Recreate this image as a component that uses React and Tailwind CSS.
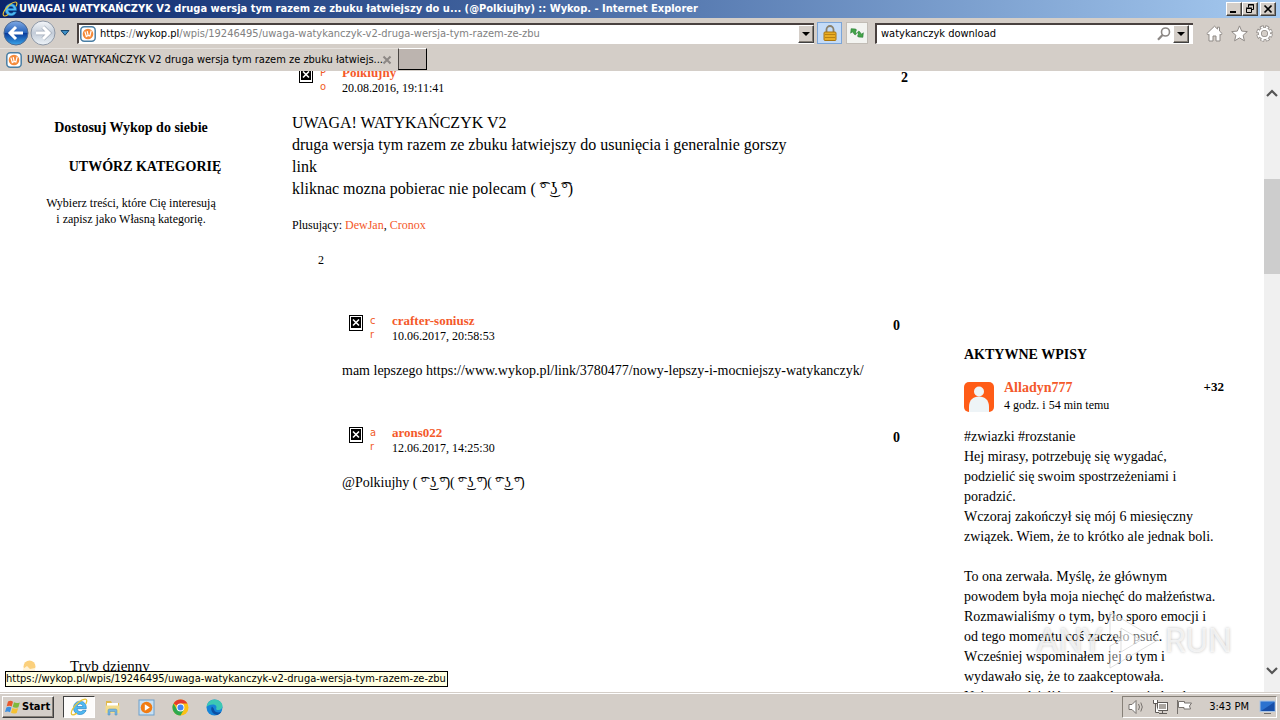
const TITLE = "UWAGA! WATYKAŃCZYK V2 druga wersja tym razem ze zbuku łatwiejszy do u... (@Polkiujhy) :: Wykop. - Internet Explorer";
const FACE = "( ͡° ͜ʖ ͡°)";
const RAISED = "border border-t-white border-l-white border-r-[#404040] border-b-[#404040] bg-[#d4cec8] shadow-[inset_-1px_-1px_0_#868078]";

function IeLogo({ className }) {
  return (
    <svg viewBox="0 0 18 18" className={className} aria-hidden="true">
      <path d="M16.300 10.700H7.100C7.300 12.600 8.500 13.700 10.200 13.700c1.200 0 2.100-.5 2.700-1.400h3.200c-.9 2.600-3.100 4.200-6 4.200-3.900 0-6.600-2.800-6.600-6.600S6.200 3.200 10 3.200s6.500 2.700 6.300 7.500zM7.200 8.500h5.700C12.700 6.900 11.700 6 10.100 6S7.500 6.900 7.200 8.500z" fill="#4fb9f2" stroke="#1978c0" strokeWidth=".6" />
      <path d="M16 5.500C17.300 3 16.900 1.200 15.200 1.100 12 1 5.800 5.400 2.500 11.200.8 14.400.8 17 3 16.900c1 0 2.200-.6 3.500-1.500" fill="none" stroke="#e9c437" strokeWidth="1.300" strokeLinecap="round" />
    </svg>
  );
}

function WykopIcon({ className }) {
  return (
    <svg viewBox="0 0 16 16" className={className} aria-hidden="true">
      <rect x=".8" y=".8" width="14.400" height="14.400" rx="3.500" fill="#fff" stroke="#4a7ea4" strokeWidth="1.500" />
      <circle cx="8" cy="8" r="5.300" fill="#f58a3a" />
      <path d="M4.900 5.600l1.400 4.900 1.700-1.100 1.900.5 1.300-5.200M7.200 5.200l.9 4" fill="none" stroke="#fff" strokeWidth="1.200" />
    </svg>
  );
}

function DropButton({ label }) {
  return (
    <button aria-label={label} className={`grid h-[18px] w-4 shrink-0 place-items-center ${RAISED}`}>
      <svg viewBox="0 0 8 4" className="h-1 w-2"><path d="M0 0h8L4 4z" fill="#000" /></svg>
    </button>
  );
}

function WindowButton({ label, children }) {
  return (
    <button aria-label={label} className={`grid h-[14px] w-4 place-items-center ${RAISED}`}>
      <svg viewBox="0 0 12 10" className="h-[10px] w-3" fill="none" stroke="#000">{children}</svg>
    </button>
  );
}

function Chrome() {
  return (
    <header className="shrink-0 bg-[#d4cec8] font-['DejaVu_Sans_Condensed',sans-serif] text-[11px]">
      <div className="flex h-[18px] items-center gap-px bg-linear-to-r from-[#0a246a] to-[#a6caf0] pl-0.5 pr-1 text-white">
        <IeLogo className="size-4 shrink-0" />
        <h1 className="min-w-0 flex-1 truncate text-[11px] leading-[18px] font-bold">{TITLE}</h1>
        <div className="flex">
          <WindowButton label="Minimize"><path d="M2 8h6" strokeWidth="2" /></WindowButton>
          <WindowButton label="Restore"><path d="M4.500 3.500v-3h5v5H8M4 1h6M2.500 4.500h5v4h-5zM2 4h6" /></WindowButton>
          <div className="w-0.5" />
          <WindowButton label="Close"><path d="M2.500 1.500l7 7M9.500 1.500l-7 7" strokeWidth="1.700" /></WindowButton>
        </div>
      </div>
      <div className="flex h-[30px] items-center pl-[3px] pr-[7px]">
        <button aria-label="Back" className="shrink-0">
          <svg viewBox="0 0 26 26" className="size-[26px]">
            <defs><linearGradient id="bk" x1="0" y1="0" x2="0" y2="1"><stop offset="0" stopColor="#7fa9e4" /><stop offset=".48" stopColor="#2763bb" /><stop offset=".52" stopColor="#0a3c9c" /><stop offset="1" stopColor="#3ba6ea" /></linearGradient></defs>
            <circle cx="13" cy="13" r="12" fill="url(#bk)" stroke="#4e6991" />
            <path d="M20 13H8M13 7l-6 6 6 6" fill="none" stroke="#fff" strokeWidth="3" />
          </svg>
        </button>
        <button aria-label="Forward" className="ml-px shrink-0">
          <svg viewBox="0 0 26 26" className="size-[26px]">
            <defs><linearGradient id="fw" x1="0" y1="0" x2="0" y2="1"><stop offset="0" stopColor="#f5f7fa" /><stop offset=".5" stopColor="#c3ccd8" /><stop offset="1" stopColor="#eef4f9" /></linearGradient></defs>
            <circle cx="13" cy="13" r="12" fill="url(#fw)" stroke="#8e98a6" />
            <path d="M6 13h12M13 7l6 6-6 6" fill="none" stroke="#a3adba" strokeWidth="4.400" />
            <path d="M6 13h12M13 7l6 6-6 6" fill="none" stroke="#fff" strokeWidth="3" />
          </svg>
        </button>
        <button aria-label="Recent pages" className="ml-1 shrink-0">
          <svg viewBox="0 0 10 6" className="h-1.5 w-2.5"><path d="M1 .5h8L5 5.300z" fill="#3d8fc6" stroke="#16456c" /></svg>
        </button>
        <div className="ml-[7px] flex h-[21px] min-w-0 flex-1 items-center gap-1 border-t-2 border-l-2 border-[#49413f] border-b border-b-white bg-white pl-px">
          <WykopIcon className="size-4 shrink-0" />
          <div role="textbox" aria-label="Address" contentEditable suppressContentEditableWarning className="min-w-0 flex-1 truncate leading-[18px] text-[#818181] outline-none">
            <span className="text-black">https</span>://<span className="text-black">wykop.pl</span>/wpis/19246495/uwaga-watykanczyk-v2-druga-wersja-tym-razem-ze-zbu
          </div>
          <DropButton label="Show addresses" />
        </div>
        <button aria-label="Security report" className="ml-[3px] grid h-[22px] w-[25px] shrink-0 place-items-center border border-[#7ba5d8] bg-[#c4dbf7]">
          <svg viewBox="0 0 14 16" className="h-4 w-3.5">
            <path d="M3.500 8V4.500a3.500 3.500 0 0 1 7 0V8" fill="none" stroke="#8a806a" strokeWidth="1.800" />
            <rect x="1" y="7" width="12" height="8.500" rx="1" fill="#e9ad25" stroke="#a87510" />
            <path d="M2 9.500h10M2 12.500h10" stroke="#b98212" />
          </svg>
        </button>
        <button aria-label="Refresh" className="ml-1 grid h-[22px] w-[22px] shrink-0 place-items-center border border-[#c2bdb6] bg-[#f3f4f1]">
          <svg viewBox="0 0 16 16" className="size-4" fill="#44a548" stroke="#207530" strokeWidth=".5">
            <path d="M4 3.200L.8 6.500 4 9.800V7.600h4.200V5.600Q5.600 5.800 5.200 3.200z" transform="rotate(50 4.500 6.500)" />
            <path d="M12 12.800l3.200-3.300L12 6.200v2.200H7.800v2Q10.400 10.200 10.800 12.800z" transform="rotate(50 11.500 9.500)" />
          </svg>
        </button>
        <div className="ml-[7px] flex h-[21px] w-[318px] items-center border-t-2 border-l-2 border-[#49413f] border-b border-b-white bg-white pr-1">
          <input aria-label="Search" defaultValue="watykanczyk download" className="h-[18px] min-w-0 flex-1 bg-white pl-1 text-[11px] outline-none" />
          <button aria-label="Run search" className="mr-px">
            <svg viewBox="0 0 16 16" className="size-4" fill="none" stroke="#8b8784"><circle cx="9.500" cy="6" r="4" strokeWidth="1.600" /><path d="M6.500 9L2 13.800" strokeWidth="2.200" /></svg>
          </button>
          <DropButton label="Search options" />
        </div>
        <nav className="ml-[13px] flex gap-2">
          <button aria-label="Home">
            <svg viewBox="0 0 17 17" className="size-[17px]" fill="#fff" stroke="#8f8a86"><path d="M8.500 1.200L.8 8.600l1.400 1.300.8-.7v6.800h4v-5h3v5h4V9.200l.8.700 1.400-1.300-2.700-2.600V2.200h-2v1.900z" /></svg>
          </button>
          <button aria-label="Favorites">
            <svg viewBox="0 0 17 17" className="size-[17px]" fill="#fff" stroke="#8f8a86"><path d="M8.500.9l2.200 5.200 5.600.5-4.200 3.700 1.300 5.500-4.900-2.900-4.900 2.900 1.300-5.500L.7 6.600l5.600-.5z" /></svg>
          </button>
          <button aria-label="Tools">
            <svg viewBox="0 0 17 17" className="size-[17px]" fill="none">
              <circle cx="8.500" cy="8.500" r="6.500" stroke="#8f8a86" strokeWidth="3.400" strokeDasharray="3.600 1.505" />
              <circle cx="8.500" cy="8.500" r="4.600" stroke="#8f8a86" strokeWidth="3.800" />
              <circle cx="8.500" cy="8.500" r="6.500" stroke="#fff" strokeWidth="2" strokeDasharray="2.200 2.905" strokeDashoffset="-.7" />
              <circle cx="8.500" cy="8.500" r="4.600" stroke="#fff" strokeWidth="2.200" />
            </svg>
          </button>
        </nav>
      </div>
      <div className="flex h-[23px] items-start">
        <div className="flex h-[23px] w-[398px] items-center border-t border-[#e6e2de] pl-1.5 pr-1.5">
          <WykopIcon className="size-4 shrink-0" />
          <span className="ml-[5px] min-w-0 flex-1 whitespace-nowrap">UWAGA! WATYKAŃCZYK V2 druga wersja tym razem ze zbuku łatwiejs...</span>
          <button aria-label="Close tab" className="shrink-0">
            <svg viewBox="0 0 10 10" className="size-2.5"><path d="M1.500 1.500l7 7M8.500 1.500l-7 7" stroke="#8d8885" strokeWidth="2" /></svg>
          </button>
        </div>
        <button aria-label="New tab" className="h-[22px] w-[29px] border border-t-white border-l-[#4a4542] border-r-black border-b-black bg-[#bcb4af]" />
      </div>
    </header>
  );
}

function PostHeader({ letters, name, date, score }) {
  return (
    <div className="flex h-[30px] pl-[7px]">
      <svg viewBox="0 0 14 16" className="mt-px h-4 w-3.5 shrink-0" role="img" aria-label={name}>
        <rect x=".5" y=".5" width="13" height="15" fill="#fff" stroke="#000" />
        <rect x="2" y="2" width="10" height="11" fill="#000" />
        <path d="M4 4.500l6 6M10 4.500l-6 6" stroke="#fff" strokeWidth="1.600" />
      </svg>
      <span className="ml-[7px] w-[22px] shrink-0 font-['DejaVu_Sans_Condensed',sans-serif] text-[11px] leading-[14px] text-[#f05a28]">
        {letters[0]}<br />{letters[1]}
      </span>
      <div className="flex-1 text-[12px]">
        <a href="#" className="block text-[13px] leading-[14px] font-bold text-[#f4592a]">{name}</a>
        <time className="block leading-4">{date}</time>
      </div>
      <b className="text-[14px] leading-[23px]">{score}</b>
    </div>
  );
}

function Reply({ children, ...head }) {
  return (
    <article className="mb-[45px]">
      <PostHeader {...head} />
      <p className="mt-[17px] text-[14px] leading-5">{children}</p>
    </article>
  );
}

const WALL = [
  "#zwiazki #rozstanie", "Hej mirasy, potrzebuję się wygadać,", "podzielić się swoim spostrzeżeniami i", "poradzić.",
  "Wczoraj zakończył się mój 6 miesięczny", "związek. Wiem, że to krótko ale jednak boli.", "",
  "To ona zerwała. Myślę, że głównym", "powodem była moja niechęć do małżeństwa.", "Rozmawialiśmy o tym, było sporo emocji i",
  "od tego momentu coś zaczęło psuć.", "Wcześniej wspominałem jej o tym i", "wydawało się, że to zaakceptowała.", "Najgorsze dzieliśmy ze sobą to, że bardzo",
].join("\n");

function Page() {
  return (
    <div className="relative flex min-h-0 flex-1 overflow-hidden bg-white font-['Liberation_Serif',serif] text-black">
      <aside className="flex w-[262px] shrink-0 flex-col text-center">
        <h2 className="mt-[47px] text-[14px] leading-5 font-bold">Dostosuj Wykop do siebie</h2>
        <h2 className="mt-5 pl-7 text-[14px] leading-[18px] font-bold">UTWÓRZ KATEGORIĘ</h2>
        <p className="mt-[19px] text-[12px] leading-4">Wybierz treści, które Cię interesują<br />i zapisz jako Własną kategorię.</p>
        <button className="mt-auto mb-4 flex items-center gap-[34px] pl-[23px] text-[15px] leading-5">
          <svg viewBox="0 0 13 13" className="size-[13px]"><circle cx="6.500" cy="6.500" r="6" fill="#fbd07c" /><path d="M0 9l4-3 3 3 5-1v5H0z" fill="#fff3d8" /></svg>
          Tryb dzienny
        </button>
      </aside>
      <main className="min-w-0 flex-1 pl-[30px]">
        <article className="-mt-[5px]">
          <PostHeader letters="Po" name="Polkiujhy" date="20.08.2016, 19:11:41" score="2" />
          <p className="mt-4 text-[16px] leading-[22px]">
            UWAGA! WATYKAŃCZYK V2<br />druga wersja tym razem ze zbuku łatwiejszy do usunięcia i generalnie gorszy<br />link<br />kliknac mozna pobierac nie polecam {FACE}
          </p>
          <p className="mt-[17px] text-[12px] leading-4">
            Plusujący: <a href="#" className="text-[#f4592a]">DewJan</a>, <a href="#" className="text-[#f4592a]">Cronox</a>
          </p>
          <p className="mt-[19px] pl-[26px] text-[12px] leading-4">2</p>
        </article>
        <section className="mt-[46px] pr-2 pl-[50px]">
          <Reply letters="cr" name="crafter-soniusz" date="10.06.2017, 20:58:53" score="0">
            mam lepszego https://www.wykop.pl/link/3780477/nowy-lepszy-i-mocniejszy-watykanczyk/
          </Reply>
          <Reply letters="ar" name="arons022" date="12.06.2017, 14:25:30" score="0">
            @Polkiujhy {FACE}{FACE}{FACE}
          </Reply>
        </section>
      </main>
      <aside className="mr-10 ml-14 w-[260px] shrink-0 pt-[274px]">
        <h2 className="text-[14px] leading-5 font-bold">AKTYWNE WPISY</h2>
        <div className="mt-3.5 flex gap-2.5">
          <svg viewBox="0 0 30 30" className="mt-[3px] size-[30px]" aria-hidden="true">
            <rect width="30" height="30" rx="5" fill="#ff5c17" />
            <circle cx="15" cy="9.500" r="5" fill="#eef4f7" />
            <path d="M5 30V25c0-7 4-10.500 10-10.500S25 18 25 25v5z" fill="#eef4f7" />
          </svg>
          <div className="flex-1">
            <a href="#" className="block text-[14px] leading-[18px] font-bold text-[#f4592a]">Alladyn777</a>
            <time className="block text-[12px] leading-4">4 godz. i 54 min temu</time>
          </div>
          <b className="text-[13px] leading-4">+32</b>
        </div>
        <p className="mt-[14px] text-[14px] leading-5 whitespace-pre">{WALL}</p>
      </aside>
      <div className="flex w-4 shrink-0 flex-col items-center bg-[#f0f0f0]">
        <svg viewBox="0 0 12 8" className="mt-[18px] h-2 w-3" fill="none" stroke="#555" strokeWidth="2.200"><path d="M1 7l5-5 5 5" /></svg>
        <div className="mt-[82px] h-[95px] w-full bg-[#cdcdcd]" />
        <svg viewBox="0 0 12 8" className="mt-auto mb-[17px] h-2 w-3" fill="none" stroke="#555" strokeWidth="2.200"><path d="M1 1l5 5 5-5" /></svg>
      </div>
      <div className="pointer-events-none absolute right-12 bottom-[22px] flex items-center gap-1 font-['Roboto',sans-serif] text-[34px] leading-[50px] text-white/70 [text-shadow:0_0_3px_rgba(0,0,0,0.25)]">
        <span>ANY</span>
        <svg viewBox="0 0 54 60" className="h-[60px] w-[54px]" fill="#fff" fillOpacity=".4" stroke="#d6d6d6" strokeOpacity=".8"><path d="M3 2l48 28L3 58V36l11-6L3 24z" /><path d="M14 18l20 12-20 12z" /></svg>
        <span>RUN</span>
      </div>
      <div role="status" className="absolute bottom-[5px] left-[5px] border border-black bg-[#ffffe1] pr-px font-['DejaVu_Sans_Condensed',sans-serif] text-[11px] leading-[14px]">
        https://wykop.pl/wpis/19246495/uwaga-watykanczyk-v2-druga-wersja-tym-razem-ze-zbu
      </div>
    </div>
  );
}

function Taskbar() {
  return (
    <footer className="flex h-7 shrink-0 items-center bg-[#d4cec8] pt-0.5 pr-[3px] pl-0.5 font-['DejaVu_Sans_Condensed',sans-serif] text-[11px] shadow-[inset_0_1px_0_#d4cec8,inset_0_2px_0_#fff]">
      <button className={`flex h-[22px] w-[52px] items-center gap-px pl-0.5 font-bold ${RAISED}`}>
        <svg viewBox="0 0 16 16" className="size-4 shrink-0">
          <path d="M3 2.500c2-1 3.500-.8 5 .2L6.700 7.500c-1.500-1-3-1-5-.2z" fill="#e8582c" />
          <path d="M9 3.200c1.700 1 3.500 1 5.800.2L13.400 8.200c-2.200.8-4 .7-5.700-.3z" fill="#7fb93c" />
          <path d="M1.400 8.400c2-.8 3.500-.8 5 .2L5 13.300c-1.500-1-3-1-5-.2z" fill="#3c8fe0" />
          <path d="M7.400 9c1.700 1 3.500 1 5.700.3l-1.400 4.700c-2.200.8-4 .7-5.700-.3z" fill="#f5c132" />
        </svg>
        Start
      </button>
      <div className="ml-[9px] flex items-center">
        <button aria-label="Internet Explorer" className="grid h-[22px] w-8 place-items-center border border-t-[#404040] border-l-[#404040] border-r-white border-b-white bg-[#fdfcfb]">
          <IeLogo className="size-[18px]" />
        </button>
        <div className="ml-[9px] flex gap-[17px]">
          <button aria-label="File Explorer">
            <svg viewBox="0 0 17 17" className="size-[17px]"><path d="M2 2h5l1 2h7v10H2z" fill="#e0b94c" /><path d="M3 4h11v3H3z" fill="#fff" /><path d="M1.500 6.500h14V14h-14z" fill="#f3dc8c" /><path d="M4 16v-4.500q0-1.500 1.500-1.500h6q1.500 0 1.500 1.500V16h-2v-3.500H6V16z" fill="#76b5de" stroke="#4c8db9" strokeWidth=".5" /></svg>
          </button>
          <button aria-label="Media Player">
            <svg viewBox="0 0 17 17" className="size-[17px]"><rect x="1" y="1" width="15" height="15" fill="#c8e0f3" stroke="#6da0cb" /><circle cx="8.500" cy="8.500" r="5.800" fill="#f17c13" /><path d="M6.800 5.200l5 3.300-5 3.300z" fill="#fff" /></svg>
          </button>
          <button aria-label="Chrome">
            <svg viewBox="0 0 17 17" className="size-[17px]"><circle cx="8.500" cy="8.500" r="8" fill="#fbc116" /><path d="M8.500 8.500L1.570 4.500A8 8 0 0 1 15.430 4.500H8.500z" fill="#e33b2e" /><path d="M8.500 8.500L5 10.500 1.570 4.500A8 8 0 0 0 8.500 16.500L12 10.500z" fill="#2da94f" /><circle cx="8.500" cy="8.500" r="3.900" fill="#fff" /><circle cx="8.500" cy="8.500" r="3" fill="#4285f4" /></svg>
          </button>
          <button aria-label="Edge">
            <svg viewBox="0 0 17 17" className="size-[17px]"><circle cx="8.500" cy="8.500" r="8" fill="#1684d8" /><path d="M.6 8C1 3.500 4.500.5 8.500.5c4.500 0 8 3 8 6.500 0 2.500-1.800 4-4 4-2 0-2.800-.9-2.200-1.800C11 8 10 5.600 7 5.600 4 5.600 1.500 6.500.6 8z" fill="#3cc8b4" /><path d="M6 7.500c-2 3 0 7.500 5 8.600 2-.6 3.500-1.800 4.400-3.400-3 1.500-7.500.5-7.500-3z" fill="#0d4fa3" /></svg>
          </button>
        </div>
      </div>
      <div className="ml-auto flex h-[22px] items-center border border-t-[#868078] border-l-[#868078] border-r-white border-b-white pl-[5px]">
        <svg viewBox="0 0 17 16" className="h-4 w-[17px]" fill="#fff" stroke="#77726e"><path d="M1 5.500h3l4-4v13l-4-4H1z" /><path d="M10.500 5q2 3 0 6M12.800 3.500q3 4.500 0 9" fill="none" /></svg>
        <svg viewBox="0 0 17 16" className="ml-[7px] h-4 w-[17px]" fill="#fff" stroke="#5e5a57"><rect x="5.500" y="3.500" width="10" height="8" /><rect x="7" y="5" width="7" height="5" fill="#aaa5a0" stroke="none" /><path d="M7 14.500h8M10.500 12v2M1.500 1v3.500h4V1M3.500 5v8.500H7" /></svg>
        <svg viewBox="0 0 17 16" className="ml-[7px] h-4 w-[17px]" fill="#fff" stroke="#77726e"><path d="M1.500 1v14M2.500 2.500h6v1.500h7l-2 3 1 3H8V8.500H2.500z" /></svg>
        <time className="ml-4">3:43 PM</time>
        <svg viewBox="0 0 17 16" className="ml-2.5 h-4 w-[17px]"><rect x="1" y="2" width="15" height="10.500" fill="#2c72cf" stroke="#a9c4e4" /><path d="M2 12L15.500 3v9z" fill="#174ea8" /><path d="M5 14.500h7" stroke="#6f6b68" /></svg>
      </div>
    </footer>
  );
}

export default function App() {
  return (
    <div className="flex h-screen flex-col overflow-hidden">
      <Chrome />
      <Page />
      <Taskbar />
    </div>
  );
}
